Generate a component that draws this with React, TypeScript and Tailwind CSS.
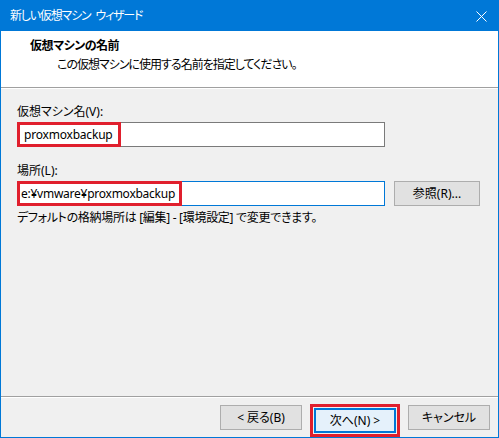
import React from "react";

const font = "[font-family:'Noto_Sans','Noto_Sans_CJK_JP',sans-serif] [font-feature-settings:'palt']";

function Btn({ children, className = "" }: { children: React.ReactNode; className?: string }) {
  return (
    <div
      className={`flex h-[25px] w-[82px] items-center justify-center border border-[#adadad] bg-[#e1e1e1] text-[12px] text-black ${className}`}
    >
      {children}
    </div>
  );
}

export default function App() {
  return (
    <div className={`${font} flex h-[438px] w-[499px] flex-col border-x border-b border-[#0078d7] bg-[#f0f0f0] text-black`}>
      {/* Title bar */}
      <div className="-mx-px flex h-[31px] shrink-0 items-center justify-between bg-[#0078d7] pl-[10px] pr-[10px] pt-[1px] text-white">
        <span className="text-[12px] leading-none tracking-[-1.2px]">
          新しい仮想マシン<span className="ml-[5px]">ウィザード</span>
        </span>
        <svg width="11" height="11" viewBox="0 0 11 11" className="mr-[2px]">
          <path d="M0.5 0.5 L10.5 10.5 M10.5 0.5 L0.5 10.5" stroke="white" strokeWidth="1" fill="none" />
        </svg>
      </div>

      {/* Header */}
      <div className="flex h-[56px] shrink-0 flex-col bg-white pl-[29px] pt-[6px]">
        <div className="text-[12px] font-bold leading-[18px] tracking-[-0.5px]">仮想マシンの名前</div>
        <div className="pl-[27px] text-[12px] leading-[20px] tracking-[-1px]">この仮想マシンに使用する名前を指定してください。</div>
      </div>
      <div className="h-px shrink-0 bg-[#a0a0a0]" />
      <div className="h-px shrink-0 bg-white" />

      {/* Body */}
      <div className="flex flex-1 flex-col px-[16px] pt-[14px]">
        <div className="text-[12px] leading-[18px]">仮想マシン名(V):</div>
        <div className="relative mt-[1px] h-[25px] w-[368px] border border-[#7a7a7a] bg-white">
          <span className="absolute left-[6px] top-[3px] text-[12px] leading-[17px] tracking-[-0.2px]">proxmoxbackup</span>
          <div className="absolute -left-px -top-px h-[25px] w-[104px] border-[3px] border-[#e01f2d]" />
        </div>

        <div className="mt-[15px] text-[12px] leading-[18px]">場所(L):</div>
        <div className="mt-[1px] flex items-center gap-[9px]">
          <div className="relative h-[25px] w-[368px] border border-[#0078d7] bg-white">
            <span className="absolute left-[3px] top-[3px] text-[12px] leading-[17px] tracking-[-0.25px]">e:¥vmware¥proxmoxbackup</span>
            <div className="absolute -left-px -top-px h-[25px] w-[165px] border-[3px] border-[#e01f2d]" />
          </div>
          <Btn className="h-[23px] w-[86px]">参照(R)...</Btn>
        </div>
        <div className="mt-[3px] text-[12px] leading-[18px] tracking-[-0.3px]">デフォルトの格納場所は [編集] - [環境設定] で変更できます。</div>
      </div>

      {/* Footer */}
      <div className="h-px shrink-0 bg-[#a0a0a0]" />
      <div className="h-px shrink-0 bg-white" />
      <div className="flex h-[39px] shrink-0 items-start justify-end gap-[8px] pr-[8px] pt-[6px]">
        <Btn className="mt-[1px]">&lt; 戻る(B)</Btn>
        <div className="border-[3px] border-[#e01f2d] p-px">
          <div className="flex h-[25px] w-[82px] items-center justify-center border-2 border-[#0078d7] bg-[#e5f1fb] text-[12px]">
            次へ(N) &gt;
          </div>
        </div>
        <Btn className="mt-[1px]">キャンセル</Btn>
      </div>
    </div>
  );
}
